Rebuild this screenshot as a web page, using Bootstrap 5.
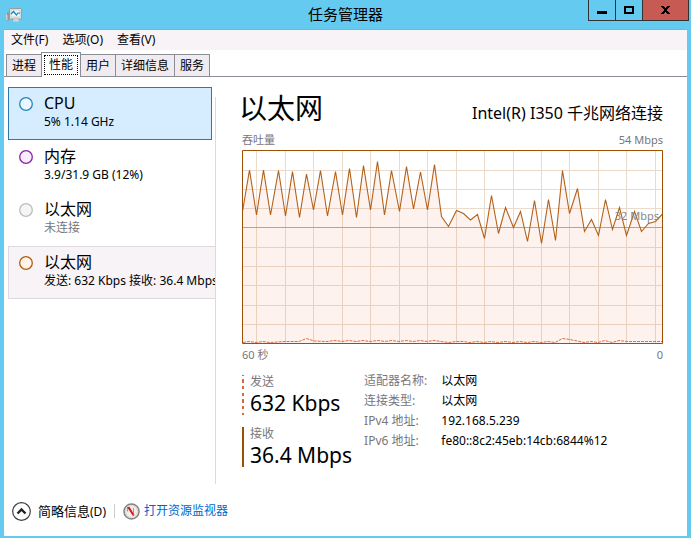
<!DOCTYPE html>
<html lang="zh-CN">
<head>
<meta charset="utf-8">
<meta name="viewport" content="width=device-width, initial-scale=1">
<title>任务管理器</title>
<link href="https://cdn.jsdelivr.net/npm/bootstrap@5.3.0/dist/css/bootstrap.min.css" rel="stylesheet">
<style>
:root { --frame: #64caef; --muted: #77767c; }
body { font-family: "Noto Sans", "Noto Sans CJK SC", sans-serif; font-size: 12px; line-height: 16px; color: #000; background: var(--frame); }
svg { display: block; flex: none; }
.app-window { padding: 0 4px 2px; }
.title-bar { height: 29px; display: grid; grid-template-columns: 1fr auto 1fr; }
.title-bar h1 { font-size: 15px; line-height: 29px; font-weight: 400; }
.win-controls { height: 21px; margin-right: -2px; border: solid #333; border-width: 0 1px 1px; }
.win-controls button { width: 27px; padding: 0; border: 0; border-left: 1px solid #333; background: var(--frame); display: flex; align-items: center; justify-content: center; }
.win-controls button:first-child { width: 26px; border-left: 0; }
.win-controls .win-close { width: 46px; background: #c75a52; }
.app-body { background: #fff; border-top: 1px solid #79b4d2; }
.menu-bar { height: 20px; background: #f7f3f7; padding-left: 7px; gap: 14px; }
.menu-bar button, .plain-btn { background: none; border: 0; padding: 0; color: #000; }
.tab-strip { height: 27px; padding-left: 2px; border-bottom: 1px solid #8c8d95; }
.tab-strip button { height: 22px; padding: 0 5px; border: 1px solid #8c8d95; border-bottom: 0; background: #f0ebf0; color: #000; margin-right: -1px; line-height: 21px; }
.tab-strip button.active { height: 25px; padding: 2px; margin-bottom: -1px; background: #fff; }
.tab-strip button.active span { display: block; height: 20px; padding: 0 4px; line-height: 17px; border: 1px dotted #000; }
.content-row { padding-top: 10px; }
.side-list { width: 212px; height: 397px; padding: 0 1px 0 4px; background: linear-gradient(#dcdadc, #dcdadc) right 10px / 1px 100% no-repeat; }
.side-list button { display: flex; width: 100%; height: 53px; padding: 5px 0 0 10px; gap: 11px; border: 1px solid transparent; background: none; text-align: left; overflow: hidden; white-space: nowrap; }
.side-list button.chosen { width: 204px; border-color: #2a7ab0; background: #d6edff; }
.side-list button.hovered { border-color: #dcdadc; border-right: 0; background: #f7f3f7; }
.side-list strong { display: block; font-size: 16px; line-height: 21px; font-weight: 400; }
.side-list svg { margin-top: 4px; }
.soft { color: var(--muted); }
.detail { padding: 0 24px 0 26px; }
.detail-head { height: 42px; }
.detail-head h2 { font-size: 28px; line-height: 42px; font-weight: 400; margin-left: -3px; }
.detail-head p { font-size: 16px; line-height: 31px; }
.caption-line { font-size: 11px; line-height: 21px; color: var(--muted); }
.chart-wrap { position: relative; }
.chart-wrap svg { width: 100%; height: 194px; }
.chart-tag { position: absolute; right: 4px; top: 56px; font-size: 11px; line-height: 20px; color: #88868a; }
.chart-wrap svg * { vector-effect: non-scaling-stroke; }
.facts { margin-top: 10px; gap: 12px; }
.rates { gap: 12px; }
.rate { height: 40px; padding-left: 6px; border-left: 2px solid #a04f06; line-height: 13px; }
.rate.sending { border-image: repeating-linear-gradient(#d9673a 0 3px, transparent 3px 6px) 2; }
.rate b { display: block; font-size: 21px; line-height: 30px; font-weight: 400; }
.facts th { font-weight: 400; color: var(--muted); padding: 0 14px 0 0; }
.facts td { padding: 0; }
.facts tr { height: 20px; }
.facts table { margin-top: -4px; align-self: flex-start; }
.foot { height: 52px; padding: 2px 0 0 8px; gap: 8px; }
.foot .plain-btn { display: flex; align-items: center; gap: 7px; }
.foot .plain-btn b { font-size: 13px; font-weight: 400; }
.foot a { color: #0066cc; display: flex; align-items: center; gap: 4px; text-decoration: none; }
.foot .rule { width: 1px; height: 14px; background: #ccc; }
</style>
<script src="https://cdn.jsdelivr.net/npm/bootstrap@5.3.0/dist/js/bootstrap.bundle.min.js"></script>
</head>
<body>
<div class="app-window min-vh-100 d-flex flex-column">
  <header class="title-bar">
    <svg class="mt-2 ms-0" width="20" height="16" viewBox="4 8 20 16">
      <path d="M7 12.500h2v8H6.500z" fill="#8f9a9c"/><path d="M6 14h1.500v6H6z" fill="#c9ced0"/><path d="M7 14h1v1H7z" fill="#42c34b"/>
      <path d="M9.500 8.500h12v10.500h-12z" fill="#e9e5df" stroke="#9f9c99"/>
      <path d="M11 10h9v7h-9z" fill="#eaf9ff" stroke="#a7c6d3" stroke-width=".6"/>
      <path d="M11 14l2.500-2.500 3 3.500 1.500-2h2" fill="none" stroke="#1684b5" stroke-width="1.200"/>
      <path d="M14 19h4l1.500 2.500h-7z" fill="#d8d4cf"/>
    </svg>
    <h1 class="mb-0">任务管理器</h1>
    <div class="win-controls d-flex ms-auto">
      <button type="button" aria-label="最小化"><svg width="10" height="10" viewBox="0 0 10 10"><path d="M0 6h10v3H0z"/></svg></button>
      <button type="button" aria-label="最大化"><svg width="10" height="8" viewBox="0 0 10 8"><path d="M1 1h8v6H1z" fill="none" stroke="#000" stroke-width="2"/></svg></button>
      <button type="button" class="win-close" aria-label="关闭"><svg width="9" height="8" viewBox="0 0 9 8"><path d="M0 0h3v1h1v1h1V1h1V0h3v1H8v1H7v1H6v2h1v1h1v1h1v1H6V7H5V6H4v1H3v1H0V7h1V6h1V5h1V3H2V2H1V1H0z"/></svg></button>
    </div>
  </header>
  <main class="app-body flex-grow-1">
    <div class="menu-bar d-flex align-items-center">
      <button type="button">文件(F)</button><button type="button">选项(O)</button><button type="button">查看(V)</button>
    </div>
    <div class="tab-strip d-flex align-items-end" role="tablist">
      <button type="button" role="tab">进程</button><button type="button" role="tab" class="active" aria-selected="true"><span>性能</span></button><button type="button" role="tab">用户</button><button type="button" role="tab">详细信息</button><button type="button" role="tab">服务</button>
    </div>
    <div class="content-row d-flex">
      <nav class="side-list flex-shrink-0">
        <button type="button" class="chosen"><svg width="14" height="14" viewBox="0 0 14 14"><circle cx="7" cy="7" r="6.300" fill="#edf7ff" stroke="#2484bd" stroke-width="1.300"/></svg><span><strong>CPU</strong>5% 1.14 GHz</span></button>
        <button type="button"><svg width="14" height="14" viewBox="0 0 14 14"><circle cx="7" cy="7" r="6.300" fill="#f8eefb" stroke="#8b1fa9" stroke-width="1.300"/></svg><span><strong>内存</strong>3.9/31.9 GB (12%)</span></button>
        <button type="button"><svg width="14" height="14" viewBox="0 0 14 14"><circle cx="7" cy="7" r="6.300" fill="#f5f5f5" stroke="#bdbdbd" stroke-width="1.300"/></svg><span class="soft"><strong class="text-black">以太网</strong>未连接</span></button>
        <button type="button" class="hovered"><svg width="14" height="14" viewBox="0 0 14 14"><circle cx="7" cy="7" r="6.300" fill="#fff3ea" stroke="#ae5d12" stroke-width="1.300"/></svg><span><strong>以太网</strong>发送: 632 Kbps 接收: 36.4 Mbps</span></button>
      </nav>
      <section class="detail flex-grow-1">
        <div class="detail-head d-flex justify-content-between align-items-end">
          <h2 class="mb-0">以太网</h2><p class="mb-0">Intel(R) I350 千兆网络连接</p>
        </div>
        <div class="caption-line d-flex justify-content-between"><span>吞吐量</span><span>54 Mbps</span></div>
        <div class="chart-wrap">
          <svg viewBox="242 150 421 194" preserveAspectRatio="none" role="img" aria-label="吞吐量">
            <path d="M256.500 150v194M285.500 150v194M313.500 150v194M342.500 150v194M370.500 150v194M399.500 150v194M427.500 150v194M456.500 150v194M484.500 150v194M513.500 150v194M541.500 150v194M569.500 150v194M598.500 150v194M626.500 150v194M655.500 150v194M242 170.500h420M242 189.500h420M242 208.500h420M242 247.500h420M242 266.500h420M242 285.500h420M242 305.500h420M242 324.500h420" fill="none" stroke="#eadbcd"/>
            <path fill="#f64a19" fill-opacity=".075" d="M242.500 344V211.500L249.500 170L256.500 215L263.500 170L270.500 215L278.500 170.500L285.500 216L292.500 171.500L299.500 217.500L306.500 174L313.500 210L320.500 170.500L327.500 216L335.500 171.500L342.500 215L349.500 168.500L356.500 217.500L363.500 165.500L370.500 210L377.500 161.500L384.500 215L391.500 170.500L399.500 211.500L406.500 166.500L413.500 209L420.500 172L427.500 210L434.500 164.500L441.500 216.500L448.500 226.500L456.500 210.500L463.500 213.500L470.500 220L477.500 214.500L484.500 238.500L491.500 195.500L498.500 233.500L505.500 207.500L513.500 227.500L520.500 211.500L527.500 241.500L534.500 200.500L541.500 243.500L548.500 199.500L555.500 240.500L562.500 170.500L569.500 213.500L577.500 188.500L584.500 231.500L591.500 219.500L598.500 235.500L605.500 199.500L612.500 229.500L619.500 207.500L626.500 235.500L634.500 211.500L641.500 231.500L648.500 223.500L655.500 221.500L662.500 214V344z"/>
            <path d="M242 227.500h420" stroke="#d09d70"/>
            <path fill="none" stroke="#b2611a" stroke-width="1.100" d="M242.500 211.500L249.500 170L256.500 215L263.500 170L270.500 215L278.500 170.500L285.500 216L292.500 171.500L299.500 217.500L306.500 174L313.500 210L320.500 170.500L327.500 216L335.500 171.500L342.500 215L349.500 168.500L356.500 217.500L363.500 165.500L370.500 210L377.500 161.500L384.500 215L391.500 170.500L399.500 211.500L406.500 166.500L413.500 209L420.500 172L427.500 210L434.500 164.500L441.500 216.500L448.500 226.500L456.500 210.500L463.500 213.500L470.500 220L477.500 214.500L484.500 238.500L491.500 195.500L498.500 233.500L505.500 207.500L513.500 227.500L520.500 211.500L527.500 241.500L534.500 200.500L541.500 243.500L548.500 199.500L555.500 240.500L562.500 170.500L569.500 213.500L577.500 188.500L584.500 231.500L591.500 219.500L598.500 235.500L605.500 199.500L612.500 229.500L619.500 207.500L626.500 235.500L634.500 211.500L641.500 231.500L648.500 223.500L655.500 221.500L662.500 214"/>
            <path fill="none" stroke="#e0703c" stroke-dasharray="3 1" d="M243 342.500L249 341.500L256 342.500L263 341.500L270 342.500L285 341.500L299 341.500L306.500 338.500L314 341L327 341.500L335 340.500L342 341.500L349 340.500L356 341.500L363 340.500L370 341.500L378 340.500L385 341.500L392 340.500L399 341.500L406 340.500L413 341.500L420 340.500L427 341.500L434 340.500L441 341.500L449 342.500L456 341.500L463 341.500L470 342.500L477 341.500L484 342.500L491 341.500L498 342.500L505 341.500L513 342.500L520 341.500L527 342.500L534 341.500L541 342.500L548 341.500L555 342.500L562.500 338.500L570 339.500L584 342.500L591 341.500L598 342.500L605 340.500L612 342.500L619 340.500L627 341.500L662 341.500"/>
            <path d="M242.500 150.500h420v193h-420z" fill="none" stroke="#a04f06"/>
          </svg>
          <span class="chart-tag">32 Mbps</span>
        </div>
        <div class="caption-line d-flex justify-content-between"><span>60 秒</span><span>0</span></div>
        <div class="facts d-flex">
          <div class="rates d-flex flex-column">
            <div class="rate sending"><span class="soft">发送</span><b>632 Kbps</b></div>
            <div class="rate"><span class="soft">接收</span><b>36.4 Mbps</b></div>
          </div>
          <table>
            <tbody>
              <tr><th scope="row">适配器名称:</th><td>以太网</td></tr>
              <tr><th scope="row">连接类型:</th><td>以太网</td></tr>
              <tr><th scope="row">IPv4 地址:</th><td>192.168.5.239</td></tr>
              <tr><th scope="row">IPv6 地址:</th><td>fe80::8c2:45eb:14cb:6844%12</td></tr>
            </tbody>
          </table>
        </div>
      </section>
    </div>
    <footer class="foot d-flex align-items-center">
      <button type="button" class="plain-btn">
        <svg width="19" height="19" viewBox="0 0 19 19"><circle cx="9.500" cy="9.500" r="8.800" fill="#fff" stroke="#3c3c44" stroke-width="1.200"/><path d="M5.500 11.500l4-4 4 4" fill="none" stroke="#222" stroke-width="2.400"/></svg>
        <span><b>简略信息</b>(D)</span>
      </button>
      <span class="rule"></span>
      <a href="#">
        <svg width="17" height="17" viewBox="0 0 17 17"><circle cx="8.500" cy="8.500" r="7.500" fill="#f1eeea" stroke="#858383" stroke-width="1.500"/><circle cx="8.500" cy="8.500" r="6" fill="none" stroke="#d5cec5" stroke-width=".8"/><path d="M4 4h2.500l5 8-1.500 1z" fill="#d5141b"/><path d="M4.500 4v4.500M10.500 5v7" fill="none" stroke="#c55" stroke-width=".7"/></svg>
        打开资源监视器
      </a>
    </footer>
  </main>
</div>
</body>
</html>
